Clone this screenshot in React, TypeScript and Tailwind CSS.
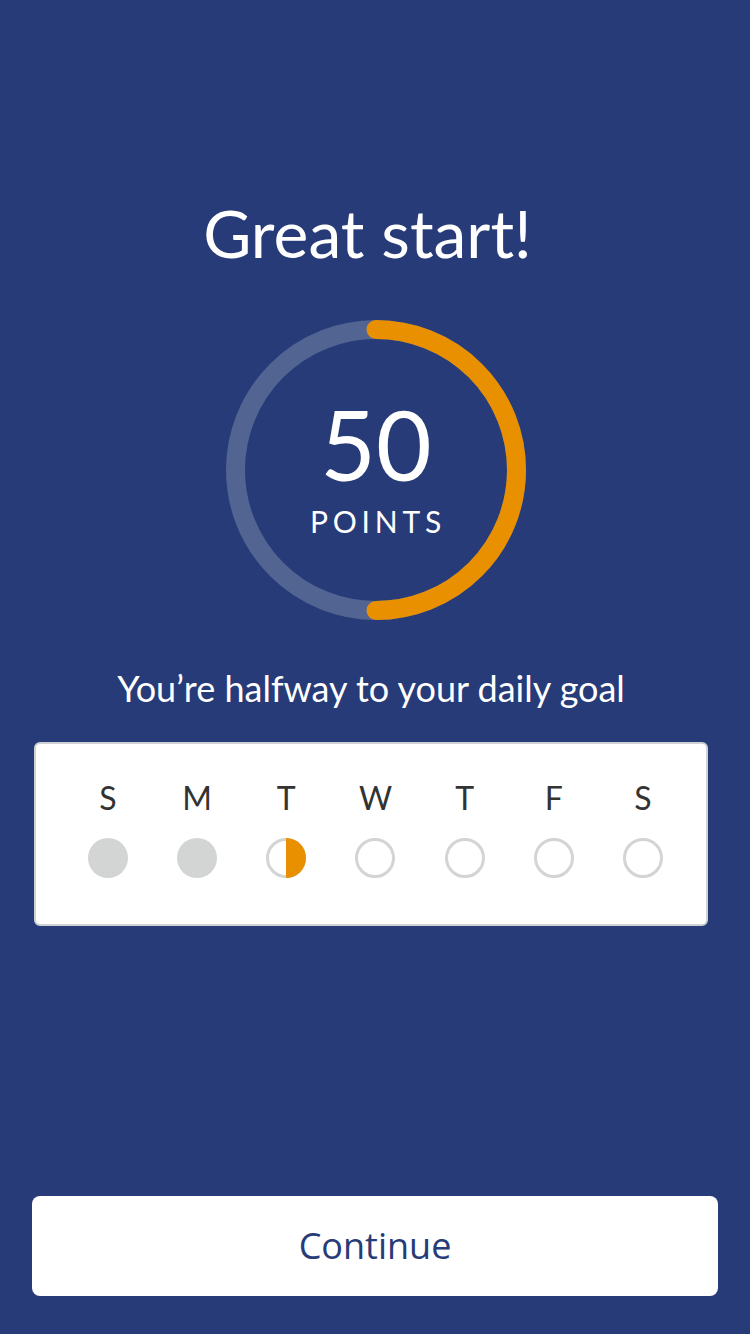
import React from 'react'

const days = [
  { label: 'S', state: 'done' },
  { label: 'M', state: 'done' },
  { label: 'T', state: 'half' },
  { label: 'W', state: 'empty' },
  { label: 'T', state: 'empty' },
  { label: 'F', state: 'empty' },
  { label: 'S', state: 'empty' },
]

function DayDot({ state }: { state: string }) {
  if (state === 'done') {
    return <div className="w-[40px] h-[40px] rounded-full bg-[#d3d4d4]" />
  }
  return (
    <svg width="40" height="40" viewBox="0 0 40 40">
      <circle cx="20" cy="20" r="18.5" fill="none" stroke="#d3d4d4" strokeWidth="3" />
      {state === 'half' && <path d="M20 0 A20 20 0 0 1 20 40 Z" fill="#e89000" />}
    </svg>
  )
}

function Ring() {
  const r = 140.5
  return (
    <div className="relative w-[300px] h-[300px]">
      <svg width="300" height="300" viewBox="0 0 300 300" className="absolute inset-0">
        <circle cx="150" cy="150" r={r} fill="none" stroke="#526492" strokeWidth="19" />
        <path
          d={`M150 ${150 - r} A${r} ${r} 0 0 1 150 ${150 + r}`}
          fill="none"
          stroke="#e89000"
          strokeWidth="19"
          strokeLinecap="round"
        />
      </svg>
      <div className="absolute inset-0 flex flex-col items-center justify-center">
        <div className="text-white text-[96px] leading-none mt-[-8px]">50</div>
        <div className="text-white text-[30px] leading-none tracking-[0.16em] mt-[14px] pl-[4px]">POINTS</div>
      </div>
    </div>
  )
}

export default function App() {
  return (
    <div
      className="w-[750px] h-[1334px] bg-[#263b78] flex flex-col items-center"
      style={{ fontFamily: 'Lato, "Noto Sans", sans-serif' }}
    >
      <h1 className="text-white text-[66px] leading-none mt-[200px] ml-[-15px]">Great start!</h1>
      <div className="mt-[54px] ml-[2px]">
        <Ring />
      </div>
      <p className="text-white text-[36px] leading-none mt-[50px] ml-[-8px]">You’re halfway to your daily goal</p>
      <div className="mt-[36px] w-[674px] h-[184px] bg-white rounded-[6px] border-2 border-[#d0d1d3] flex justify-between pl-[52px] pr-[43px] pt-[38px] ml-[-8px]">
        {days.map((d, i) => (
          <div key={i} className="flex flex-col items-center w-[40px]">
            <div className="text-[#333333] text-[32px] leading-none h-[32px]">{d.label}</div>
            <div className="mt-[24px]">
              <DayDot state={d.state} />
            </div>
          </div>
        ))}
      </div>
      <div className="flex-1" />
      <button
        className="w-[686px] h-[100px] bg-white rounded-[8px] text-[#263b78] text-[36px] mb-[38px]"
        style={{ fontFamily: '"Open Sans", sans-serif' }}
      >
        Continue
      </button>
    </div>
  )
}
